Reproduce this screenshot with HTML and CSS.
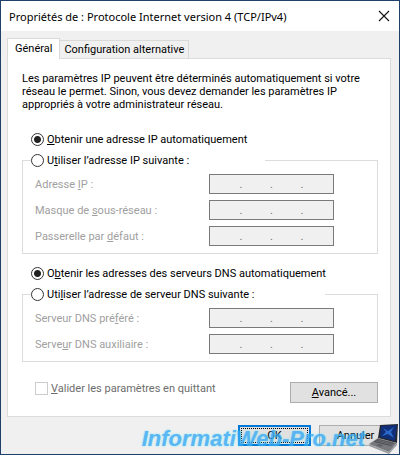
FILE: index.html
```html
<!DOCTYPE html>
<html lang="fr">
  <head>
    <meta charset="UTF-8" />
    <meta name="viewport" content="width=device-width, initial-scale=1.0" />
    <title>Propriétés de : Protocole Internet version 4 (TCP/IPv4)</title>
    <link rel="stylesheet" href="styles.css">
  </head>
  <body>
    <div class="window">
      <header class="titlebar">
        <h1>Propriétés de : Protocole Internet version 4 (TCP/IPv4)</h1>
        <button class="close" aria-label="Fermer">
          <svg width="12" height="12" viewBox="0 0 12 12"><path d="M1 1l10 10M11 1L1 11" stroke="#111" stroke-width="1.1" /></svg>
        </button>
      </header>

      <div class="tabs" role="tablist">
        <button class="tab active" role="tab" aria-selected="true">Général</button>
        <button class="tab" role="tab" aria-selected="false">Configuration alternative</button>
      </div>

      <main class="panel">
        <p class="intro">Les paramètres IP peuvent être déterminés automatiquement si votre<br />réseau le permet. Sinon, vous devez demander les paramètres IP<br />appropriés à votre administrateur réseau.</p>

        <!-- Adresse IP -->
        <div class="option">
          <input type="radio" name="ip" id="ip-auto" checked />
          <label for="ip-auto"><u>O</u>btenir une adresse IP automatiquement</label>
        </div>
        <fieldset class="group">
          <legend class="legend-ip">
            <span class="option">
              <input type="radio" name="ip" id="ip-manual" />
              <label for="ip-manual">U<u>t</u>iliser l’adresse IP suivante :</label>
            </span>
          </legend>
          <div class="row">
            <label for="addr">Adresse <u>I</u>P :</label>
            <div class="ip"><input id="addr" disabled /><i>.</i><input disabled /><i>.</i><input disabled /><i>.</i><input disabled /></div>
          </div>
          <div class="row">
            <label for="mask">Masque de <u>s</u>ous-réseau :</label>
            <div class="ip"><input id="mask" disabled /><i>.</i><input disabled /><i>.</i><input disabled /><i>.</i><input disabled /></div>
          </div>
          <div class="row">
            <label for="gateway">Passerelle par <u>d</u>éfaut :</label>
            <div class="ip"><input id="gateway" disabled /><i>.</i><input disabled /><i>.</i><input disabled /><i>.</i><input disabled /></div>
          </div>
        </fieldset>

        <!-- Serveurs DNS -->
        <div class="option">
          <input type="radio" name="dns" id="dns-auto" checked />
          <label for="dns-auto">O<u>b</u>tenir les adresses des serveurs DNS automatiquement</label>
        </div>
        <fieldset class="group">
          <legend class="legend-dns">
            <span class="option">
              <input type="radio" name="dns" id="dns-manual" />
              <label for="dns-manual">Uti<u>l</u>iser l’adresse de serveur DNS suivante :</label>
            </span>
          </legend>
          <div class="row">
            <label for="dns1">Serveur DNS pré<u>f</u>éré :</label>
            <div class="ip"><input id="dns1" disabled /><i>.</i><input disabled /><i>.</i><input disabled /><i>.</i><input disabled /></div>
          </div>
          <div class="row">
            <label for="dns2">Serve<u>u</u>r DNS auxiliaire :</label>
            <div class="ip"><input id="dns2" disabled /><i>.</i><input disabled /><i>.</i><input disabled /><i>.</i><input disabled /></div>
          </div>
        </fieldset>

        <div class="bottom">
          <div class="validate">
            <input type="checkbox" id="validate" disabled />
            <label for="validate"><u>V</u>alider les paramètres en quittant</label>
          </div>
          <button class="btn advanced"><u>A</u>vancé...</button>
        </div>
      </main>

      <footer class="actions">
        <button class="btn ok"><span>OK</span></button>
        <button class="btn">Annuler</button>
      </footer>

      <div class="watermark">
        <span>InformatiWeb-Pro.net</span>
        <svg width="30" height="30" viewBox="0 0 30 30">
          <path d="M11 1L29 0L28 19L9 14Z" fill="#25282e" />
          <path d="M12 2L28 1L26 17L11 13Z" fill="#102f78" />
          <path d="M14 4L19 7L25 3L22 8L25 14L19 10L13 12L17 8Z" fill="#2b68c8" />
          <path d="M9 14L28 19L20 28L0 20Z" fill="#77797d" />
          <path d="M9 15L25 19L22 22L5 18Z" fill="#484a4f" />
          <path d="M7 17L23 21M9 16L24 20" stroke="#85878b" stroke-width=".6" />
          <path d="M9 20L14 21L12 23L7 21Z" fill="#5d5f64" />
          <path d="M0 20L20 28L28 19V21L20 30L0 22Z" fill="#9b9da1" />
        </svg>
      </div>
    </div>
  </body>
</html>
```
FILE: styles.css
```css
* {
  box-sizing: border-box;
}

body {
  margin: 0;
  font-family: Roboto, "DejaVu Sans", sans-serif;
  font-size: 11px;
  line-height: 13px;
  color: #000;
}

button,
input {
  font: inherit;
  color: inherit;
  margin: 0;
}

.window {
  position: relative;
  min-height: 100vh;
  background: #f0f0f0;
  border: 1px solid #1f4068;
}

.titlebar {
  display: flex;
  align-items: center;
  justify-content: space-between;
  height: 30px;
  padding: 0 9px 0 8px;
  background: #fff;
}

.titlebar h1 {
  margin: 0;
  font-family: "Noto Sans", "Open Sans", sans-serif;
  font-size: 11px;
  font-weight: 400;
  white-space: nowrap;
}

.close {
  display: flex;
  padding: 0;
  border: 0;
  background: none;
}

.tabs {
  display: flex;
  align-items: flex-end;
  padding: 7px 6px 0;
}

.tab {
  height: 18px;
  padding: 0 4px;
  border: 1px solid #d9d9d9;
  border-width: 1px 1px 0 0;
  background: #f0f0f0;
  white-space: nowrap;
}

.tab.active {
  position: relative;
  z-index: 1;
  height: 21px;
  margin-bottom: -1px;
  padding: 0 7px 2px;
  border-left-width: 1px;
  background: #fff;
}

.panel {
  margin: 0 8px 0 6px;
  padding: 13px 12px 13px 14px;
  border: 1px solid #dcdcdc;
  background: #fff;
}

.intro {
  margin: 0 0 21px;
  white-space: nowrap;
}

.option {
  display: flex;
  align-items: center;
  gap: 3px;
  height: 15px;
  white-space: nowrap;
}

.panel > .option {
  padding-left: 9px;
}

input[type="radio"] {
  appearance: none;
  flex: none;
  width: 13px;
  height: 13px;
  border: 1px solid #333;
  border-radius: 50%;
  background: #fff;
}

input[type="radio"]:checked {
  background: radial-gradient(circle, #222 3px, #fff 4px);
}

.group {
  min-width: 0;
  margin: 6px 0 12px;
  padding: 6px 43px 7px 12px;
  border: 1px solid #dcdcdc;
}

.group legend {
  margin-left: -4px;
  padding: 0;
}

.legend-ip {
  width: 234px;
}

.legend-dns {
  width: 294px;
}

.row {
  display: flex;
  align-items: center;
  justify-content: space-between;
  color: #a0a0a0;
}

.row + .row {
  margin-top: 6px;
}

.ip {
  display: flex;
  align-items: center;
  width: 125px;
  height: 20px;
  padding: 0 2px;
  border: 1px solid #7a7a7a;
  background: #f0f0f0;
  color: #6d6d6d;
}

.ip input {
  flex: 1;
  min-width: 0;
  height: 16px;
  padding: 0;
  border: 0;
  background: none;
}

.ip i {
  width: 3px;
  font-style: normal;
}

.bottom {
  display: flex;
  align-items: flex-start;
  justify-content: space-between;
  margin-top: 20px;
}

.validate {
  display: flex;
  align-items: center;
  gap: 3px;
  padding-left: 13px;
  color: #6d6d6d;
}

.validate input {
  appearance: none;
  width: 13px;
  height: 13px;
  border: 1px solid #ccc;
  background: #fff;
}

.btn {
  width: 73px;
  height: 21px;
  padding: 0;
  border: 1px solid #adadad;
  background: #e1e1e1;
}

.btn.advanced {
  width: 88px;
}

.btn.ok {
  padding: 1px;
  border: 2px solid #0078d7;
}

.btn.ok span {
  display: block;
  border: 1px dotted #000;
}

.actions {
  display: flex;
  justify-content: flex-end;
  gap: 8px;
  padding: 8px 7px;
}

.watermark {
  position: absolute;
  right: 0;
  bottom: 0;
  display: flex;
  align-items: center;
  gap: 4px;
  pointer-events: none;
}

.watermark span {
  font-family: "Liberation Sans", sans-serif;
  font-size: 22px;
  font-weight: 700;
  font-style: italic;
  line-height: 24px;
  color: #35aaf5;
  text-shadow: 0 0 2px #5fe0f5;
  opacity: 0.8;
}
```
